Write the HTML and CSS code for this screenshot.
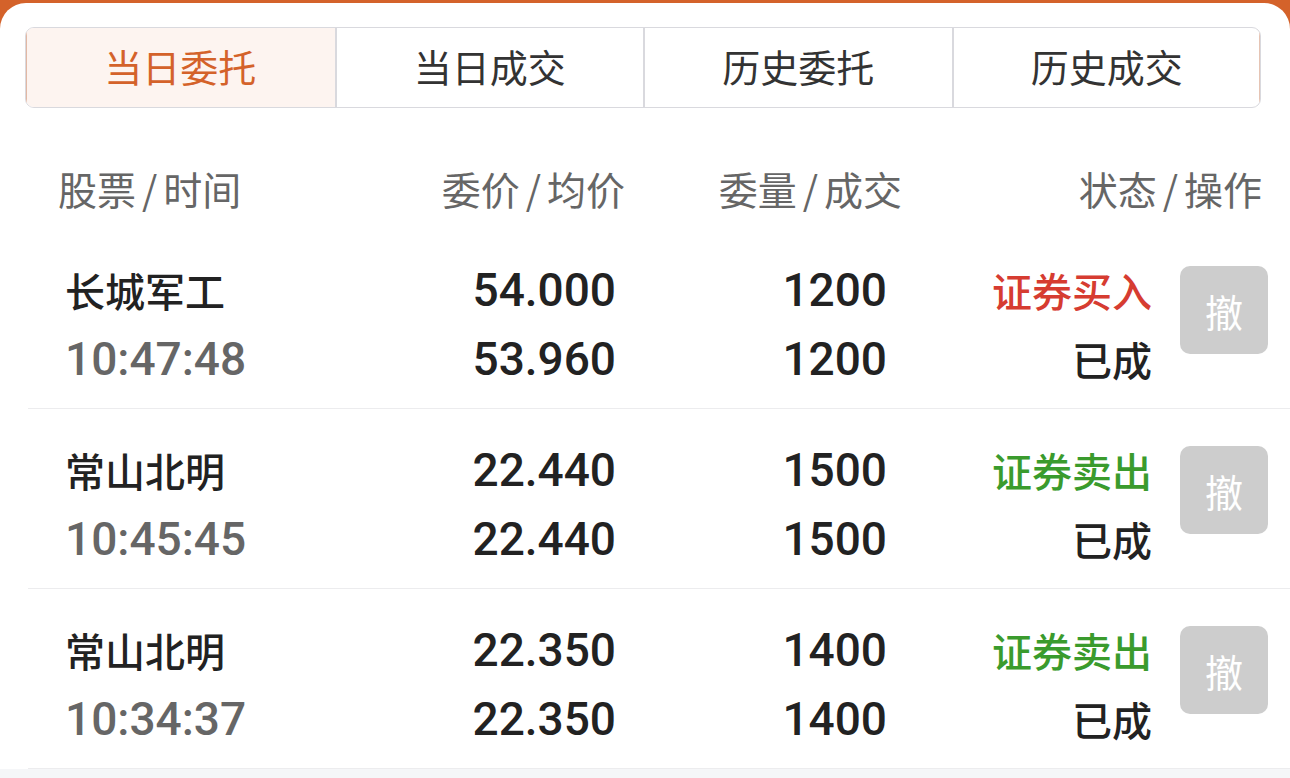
FILE: index.html
```html
<!DOCTYPE html>
<html lang="zh-CN">
<head>
    <meta charset="UTF-8">
    <meta name="viewport" content="width=device-width, initial-scale=1.0">
    <title>当日委托</title>
    <link rel="stylesheet" href="styles.css">
</head>
<body>
    <div class="top-band">
        <div class="card">
            <nav class="tabs">
                <div class="tab active">当日委托</div>
                <div class="tab">当日成交</div>
                <div class="tab">历史委托</div>
                <div class="tab">历史成交</div>
            </nav>
            <div class="list-head">
                <span>股票<i class="sep">/</i>时间</span>
                <span class="right">委价<i class="sep">/</i>均价</span>
                <span class="right">委量<i class="sep">/</i>成交</span>
                <span class="right">状态<i class="sep">/</i>操作</span>
            </div>
            <div class="order">
                <div class="cell">
                    <span class="name">长城军工</span>
                    <span class="time">10:47:48</span>
                </div>
                <div class="cell num">
                    <span>54.000</span>
                    <span>53.960</span>
                </div>
                <div class="cell num">
                    <span>1200</span>
                    <span>1200</span>
                </div>
                <div class="cell status">
                    <span class="buy">证券买入</span>
                    <span>已成</span>
                </div>
                <div class="cell action"><button class="cancel">撤</button></div>
            </div>
            <div class="order">
                <div class="cell">
                    <span class="name">常山北明</span>
                    <span class="time">10:45:45</span>
                </div>
                <div class="cell num">
                    <span>22.440</span>
                    <span>22.440</span>
                </div>
                <div class="cell num">
                    <span>1500</span>
                    <span>1500</span>
                </div>
                <div class="cell status">
                    <span class="sell">证券卖出</span>
                    <span>已成</span>
                </div>
                <div class="cell action"><button class="cancel">撤</button></div>
            </div>
            <div class="order">
                <div class="cell">
                    <span class="name">常山北明</span>
                    <span class="time">10:34:37</span>
                </div>
                <div class="cell num">
                    <span>22.350</span>
                    <span>22.350</span>
                </div>
                <div class="cell num">
                    <span>1400</span>
                    <span>1400</span>
                </div>
                <div class="cell status">
                    <span class="sell">证券卖出</span>
                    <span>已成</span>
                </div>
                <div class="cell action"><button class="cancel">撤</button></div>
            </div>
        </div>
    </div>
</body>
</html>
```

FILE: styles.css
```css
:root {
    --orange: #d4622a;
    --border-color: #d9d9de;
    --line-color: #ececee;
    --text-dark: #222;
    --text-gray: #666;
    --buy: #d63c31;
    --sell: #3a9b2d;
}
body {
    margin: 0;
    background-color: #f5f6f8;
    font-family: "Noto Sans CJK SC", "Noto Sans", sans-serif;
    color: var(--text-dark);
}
.top-band {
    background-color: var(--orange);
    padding-top: 3px;
}
.card {
    background-color: #fff;
    border-radius: 26px 26px 0 0;
    padding-top: 24px;
}
.tabs {
    display: grid;
    grid-template-columns: repeat(4, 1fr);
    margin: 0 29px 0 25px;
    height: 81px;
    box-sizing: border-box;
    border: 1px solid var(--border-color);
    border-radius: 9px;
    overflow: hidden;
}
.tab {
    display: flex;
    align-items: center;
    justify-content: center;
    padding-bottom: 4px;
    font-size: 38px;
    color: #333;
    border-left: 2px solid var(--border-color);
}
.tab:first-child {
    border-left: none;
}
.tab.active {
    background-color: #fdf4f0;
    color: var(--orange);
    box-shadow: inset 1px 0 0 #e2b8a4;
}
.tabs .tab:last-child {
    box-shadow: inset -1px 0 0 #e6c4b4;
}
.list-head {
    display: grid;
    grid-template-columns: 1fr 240px 277px 360px;
    padding: 60px 28px 21px 58px;
    font-size: 39px;
    line-height: 40px;
    color: var(--text-gray);
}
.sep {
    font-style: normal;
    margin: 0 6px;
}
.right {
    text-align: right;
}
.order {
    display: grid;
    grid-template-columns: 341px 210px 271px 265px 116px;
    margin-left: 28px;
    padding: 27px 22px 14px 37px;
    border-bottom: 1px solid var(--line-color);
}
.cell {
    display: flex;
    flex-direction: column;
}
.cell span {
    height: 69px;
    line-height: 69px;
    white-space: nowrap;
}
.name {
    font-size: 40px;
    font-weight: 500;
}
.time {
    font-family: Roboto, "Liberation Sans", sans-serif;
    font-size: 46px;
    font-weight: 500;
    color: var(--text-gray);
}
.num {
    align-items: flex-end;
    font-family: Roboto, "Liberation Sans", sans-serif;
    font-size: 46px;
    font-weight: 500;
}
.status {
    align-items: flex-end;
    font-size: 40px;
    font-weight: 500;
}
.buy { color: var(--buy); }
.sell { color: var(--sell); }
.action {
    align-items: flex-end;
}
.cancel {
    width: 88px;
    height: 88px;
    margin-top: 10px;
    border: none;
    border-radius: 10px;
    background-color: #cdcdcd;
    color: #fff;
    font-family: "Noto Sans CJK SC", sans-serif;
    font-size: 38px;
    padding: 0;
}
```
